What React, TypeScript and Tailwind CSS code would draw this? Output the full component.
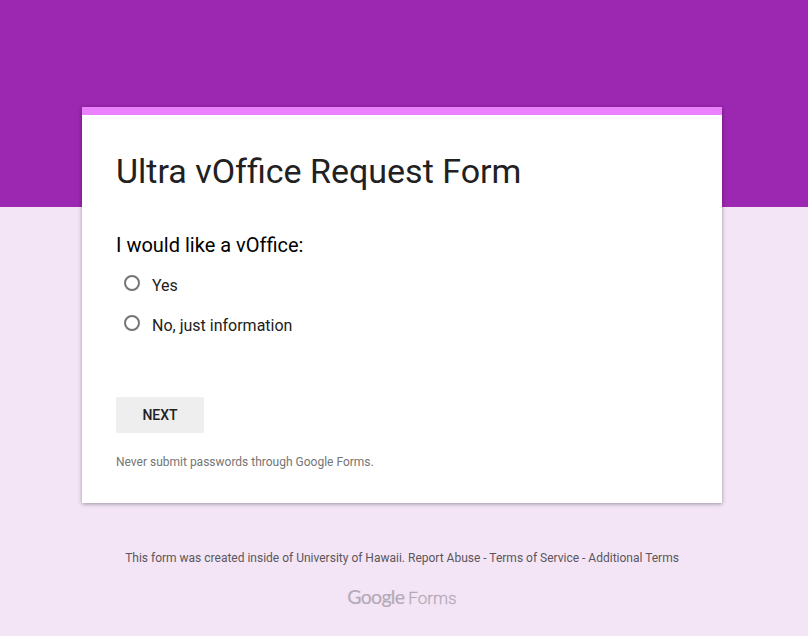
import React from "react";

function Option({ label }: { label: string }) {
  return (
    <label className="flex h-10 items-center">
      <span className="mt-[-4px] ml-2 size-4 rounded-full border-2 border-[#757575]" />
      <span className="ml-3 mt-0.5 text-[16px] leading-6 text-[#212121]">{label}</span>
    </label>
  );
}

export default function App() {
  return (
    <div className="h-[636px] w-full overflow-hidden bg-[#f3e5f5] font-['Roboto',sans-serif]">
      <div className="h-[207px] bg-[#9c27b0]" />
      <main className="relative ml-[82px] mt-[-100px] flex h-[396px] w-[640px] flex-col items-start border-t-8 border-[#ea80fc] bg-white px-[34px] shadow-[0_1px_4px_rgba(0,0,0,0.37)]">
        <h1 className="mt-8 whitespace-nowrap text-[34px] leading-[48px] text-[#212121]">Ultra <span className="inline-block">vOf</span>fice Request Form</h1>
        <h2 className="mt-[37px] whitespace-nowrap text-[20px] leading-[26px] text-black">I would like a <span className="inline-block">vOf</span>fice:</h2>
        <div className="mt-[7px]">
          <Option label="Yes" />
          <Option label="No, just information" />
        </div>
        <button className="mt-[52px] h-9 w-[88px] shrink-0 rounded-[2px] bg-[#eeeeee] text-[14px] font-medium text-[#212121]">NEXT</button>
        <p className="mt-[21px] whitespace-nowrap text-[12px] leading-4 text-[#757575]">Never submit passwords through Google Forms.</p>
      </main>
      <footer className="ml-[82px] mt-[47px] flex w-[640px] flex-col items-center">
        <p className="whitespace-nowrap text-[12px] leading-4 text-[#5b565c]">This form was created inside of University of Hawaii. Report Abuse - Terms of Service - Additional Terms</p>
        <div className="mt-[19px] flex items-baseline whitespace-nowrap leading-6 text-[#b5aab7]">
          <span className="font-['Lato',sans-serif] text-[19.5px] tracking-[-0.7px] [-webkit-text-stroke:0.2px_#b5aab7]">Google</span>
          <span className="ml-1 text-[17px] font-light [-webkit-text-stroke:0.3px_#b5aab7]">Forms</span>
        </div>
      </footer>
    </div>
  );
}
